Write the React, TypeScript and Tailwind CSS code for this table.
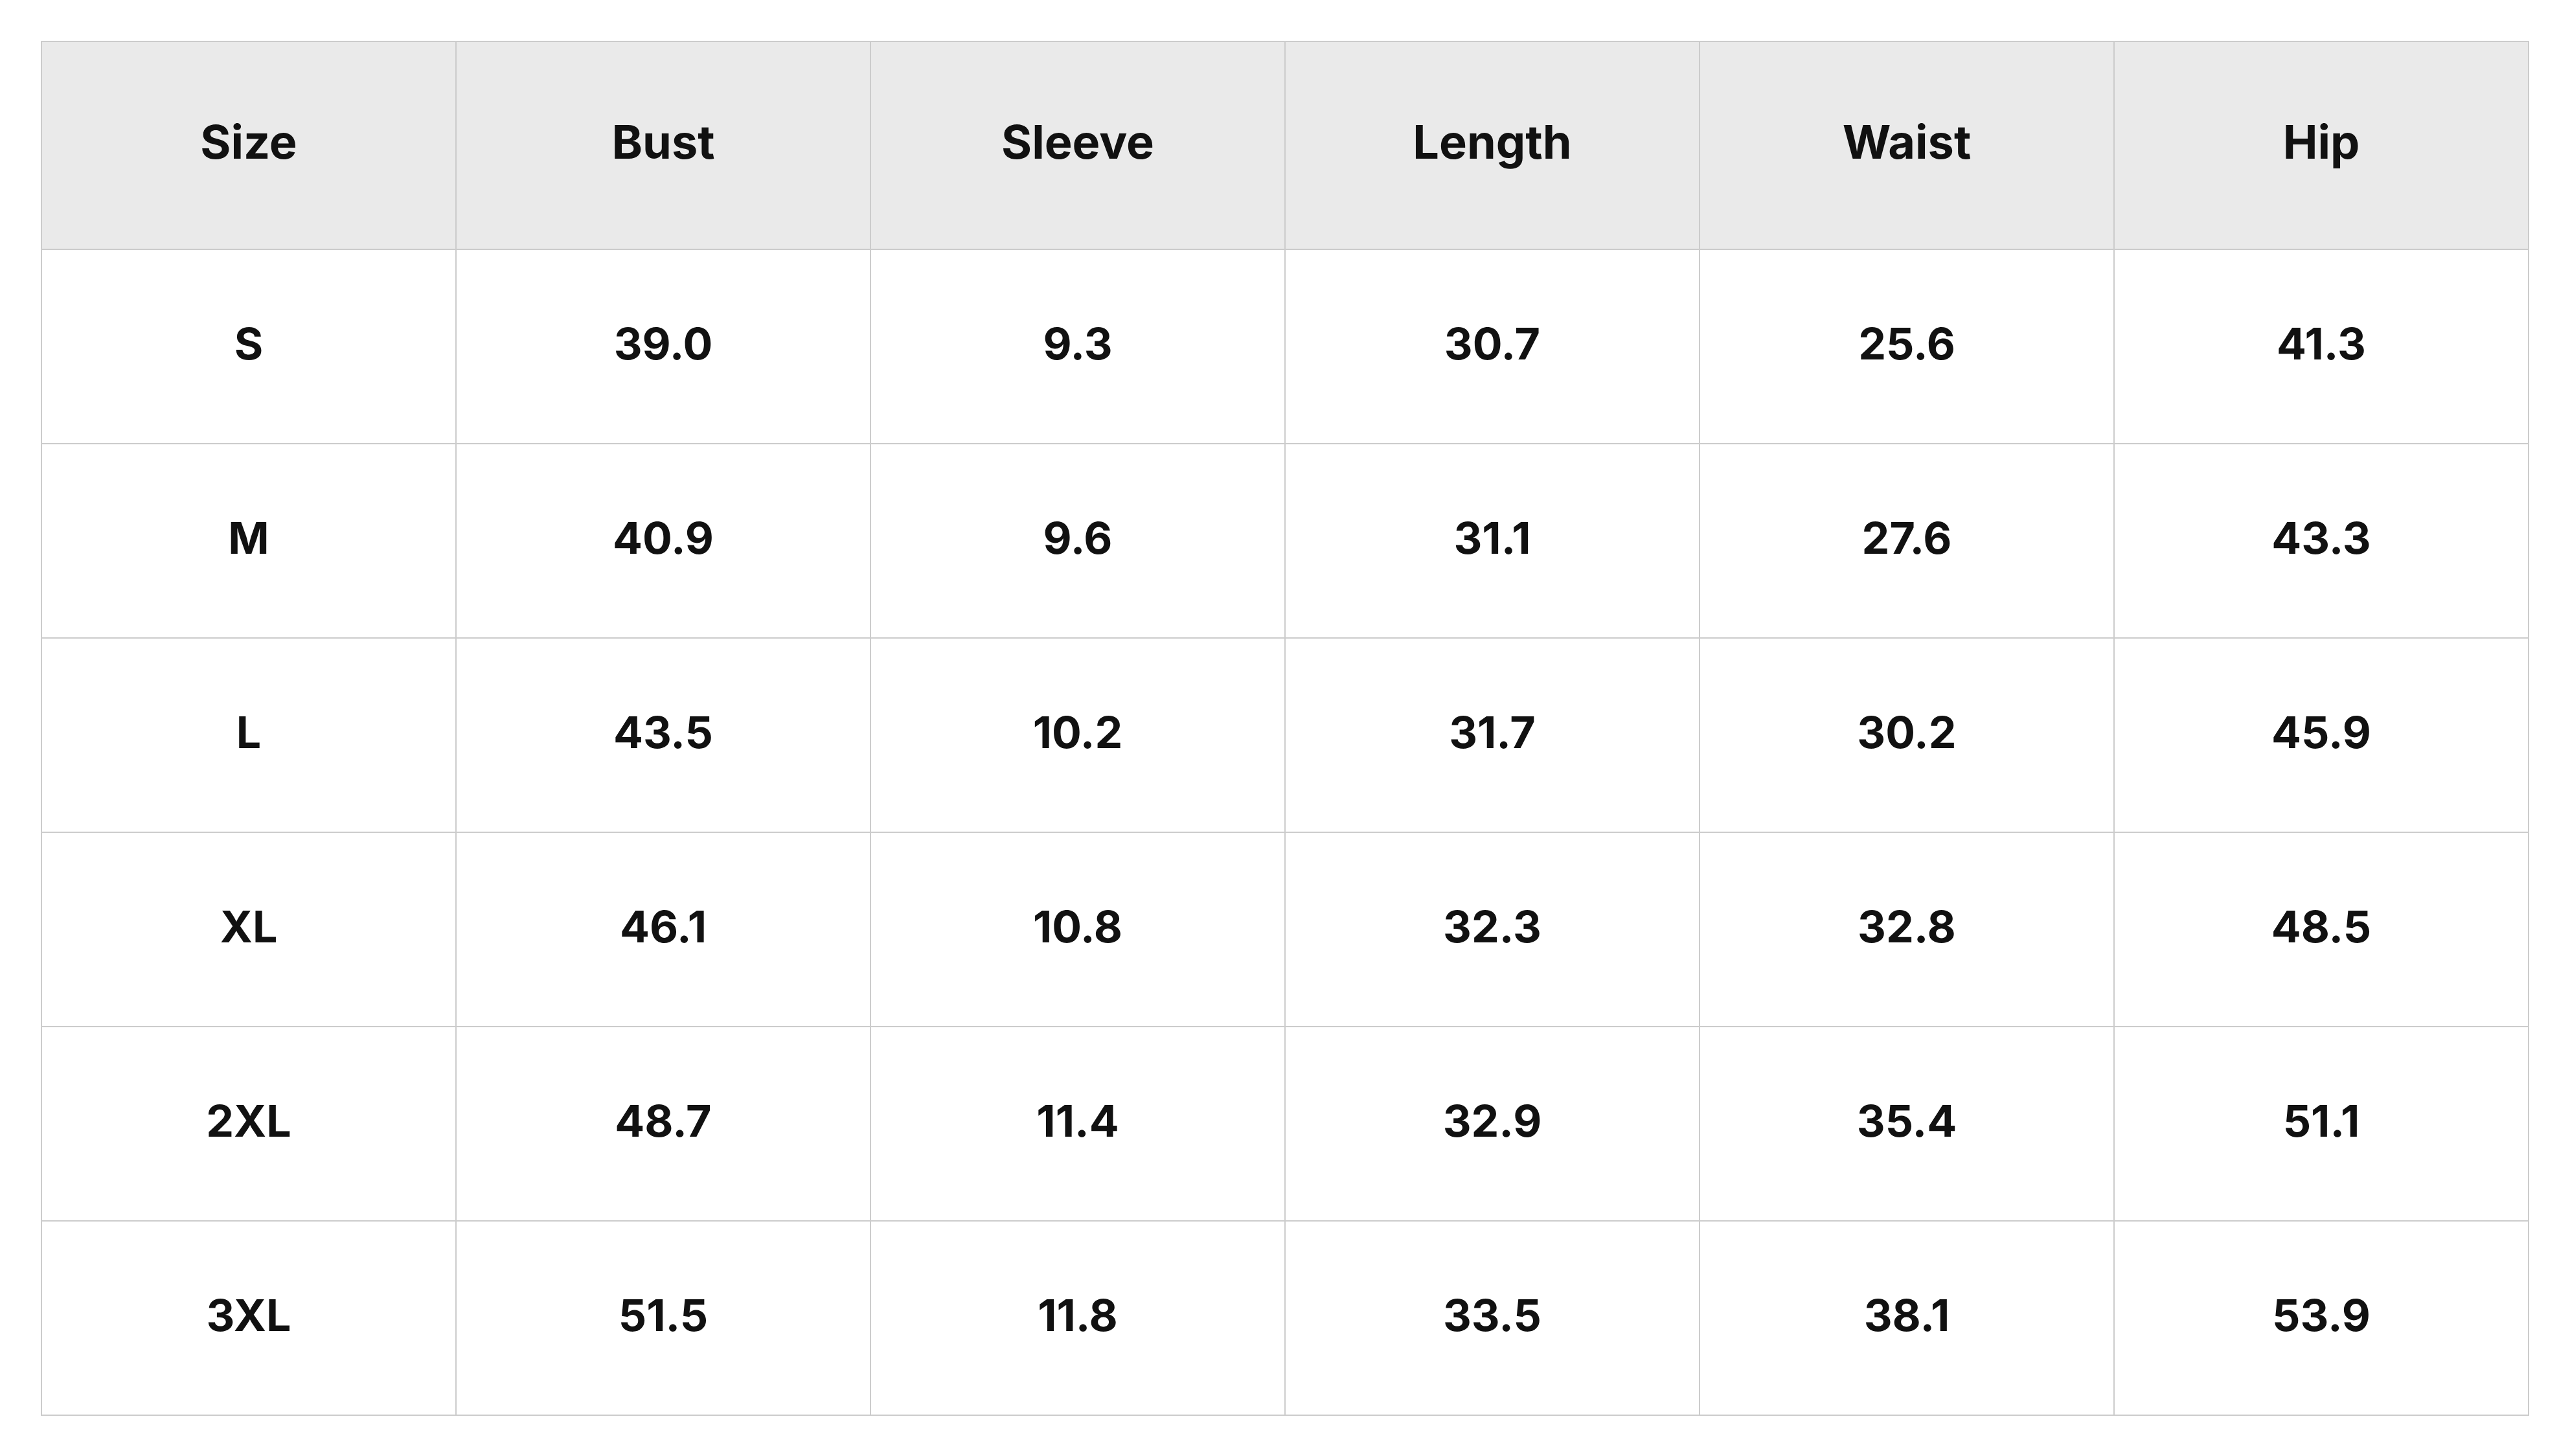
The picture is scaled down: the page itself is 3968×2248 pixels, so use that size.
const headers = ["Size", "Bust", "Sleeve", "Length", "Waist", "Hip"];

const rows = [
  ["S", "39.0", "9.3", "30.7", "25.6", "41.3"],
  ["M", "40.9", "9.6", "31.1", "27.6", "43.3"],
  ["L", "43.5", "10.2", "31.7", "30.2", "45.9"],
  ["XL", "46.1", "10.8", "32.3", "32.8", "48.5"],
  ["2XL", "48.7", "11.4", "32.9", "35.4", "51.1"],
  ["3XL", "51.5", "11.8", "33.5", "38.1", "53.9"],
];

export default function App() {
  return (
    <div className="min-h-[2248px] w-[3968px] bg-white px-[63px] pt-[63px] font-['Inter','Noto_Sans',sans-serif] text-[#111111]">
      <table className="w-full table-fixed border-collapse border-2 border-[#cccccc]">
        <thead>
          <tr className="h-[321px] bg-[#eaeaea]">
            {headers.map((h) => (
              <th
                key={h}
                className="border-2 border-[#cccccc] pb-[12px] text-center align-middle text-[72px] font-bold leading-none"
              >
                {h}
              </th>
            ))}
          </tr>
        </thead>
        <tbody>
          {rows.map((row) => (
            <tr key={row[0]} className="h-[300px]">
              {row.map((cell, i) => (
                <td
                  key={i}
                  className="border-2 border-[#cccccc] pb-[10px] text-center align-middle text-[68px] font-bold leading-none"
                >
                  {cell}
                </td>
              ))}
            </tr>
          ))}
        </tbody>
      </table>
    </div>
  );
}
